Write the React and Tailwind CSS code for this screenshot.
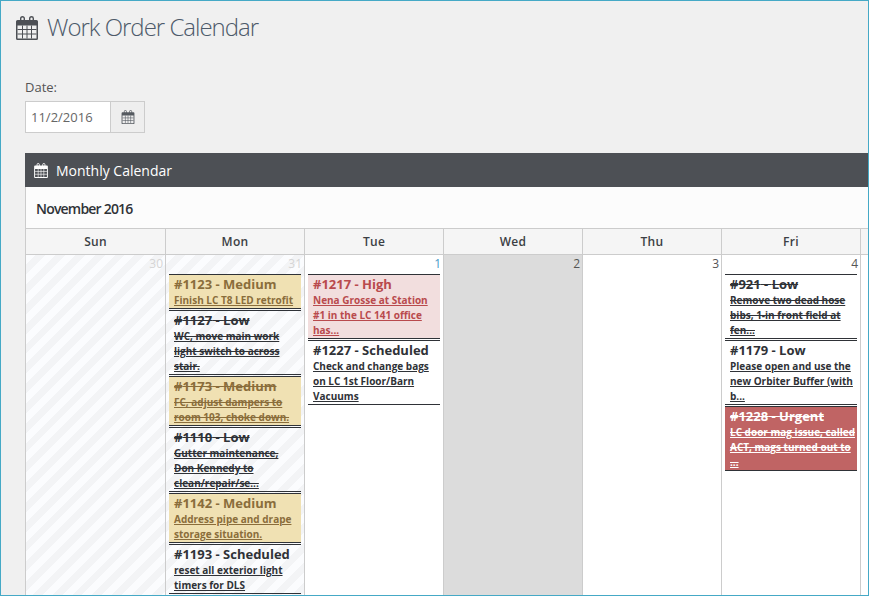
import React from "react";

const CalendarIcon = ({ className }) => (
  <svg className={className} viewBox="0 0 22 24" fill="none">
    {/* body */}
    <path
      fillRule="evenodd"
      fill="currentColor"
      d="M1.5 4H20.5A1.5 1.5 0 0 1 22 5.5V22.5A1.5 1.5 0 0 1 20.5 24H1.5A1.5 1.5 0 0 1 0 22.5V5.5A1.5 1.5 0 0 1 1.5 4ZM1.5 9.5V22.5H20.5V9.5Z"
    />
    <path
      stroke="currentColor"
      strokeWidth="1"
      d="M1.5 13.5H20.5M1.5 18H20.5M6.5 9.5V22.5M11 9.5V22.5M15.5 9.5V22.5"
    />
    {/* rings */}
    <path
      stroke="currentColor"
      strokeWidth="1.4"
      d="M4.7 5V2.5A1.8 1.8 0 0 1 8.3 2.5V5M13.7 5V2.5A1.8 1.8 0 0 1 17.3 2.5V5"
    />
  </svg>
);

const Event = ({ id, level, text, done, tone }) => {
  const tones = {
    plain: "text-[#2f3237]",
    medium: "bg-[#f0e1b3] text-[#8a6d3b]",
    high: "bg-[#f2dede] text-[#b94a4d]",
    urgent: "bg-[#c06464] text-white",
  };
  return (
    <div className={`mb-[1px] border-y border-[#2f3237] pl-[5px] ${tones[tone]} ${done ? "line-through" : ""}`}>
      <div className="h-[18px] text-[13px] font-bold leading-[18px]">
        #{id} - {level}
      </div>
      <div className="text-[10px] font-bold leading-[15px]">
        <span className="underline">{text}</span>
      </div>
    </div>
  );
};

const days = ["Sun", "Mon", "Tue", "Wed", "Thu", "Fri", ""];

const cells = [
  { num: 30, muted: true, striped: true, events: [] },
  {
    num: 31,
    muted: true,
    striped: true,
    events: [
      { id: 1123, level: "Medium", tone: "medium", text: "Finish LC T8 LED retrofit" },
      { id: 1127, level: "Low", tone: "plain", done: true, text: "WC, move main work light switch to across stair." },
      { id: 1173, level: "Medium", tone: "medium", done: true, text: "FC, adjust dampers to room 103, choke down." },
      { id: 1110, level: "Low", tone: "plain", done: true, text: "Gutter maintenance, Don Kennedy to clean/repair/se..." },
      { id: 1142, level: "Medium", tone: "medium", text: "Address pipe and drape storage situation." },
      { id: 1193, level: "Scheduled", tone: "plain", text: "reset all exterior light timers for DLS" },
    ],
  },
  {
    num: 1,
    events: [
      { id: 1217, level: "High", tone: "high", text: "Nena Grosse at Station #1 in the LC 141 office has..." },
      { id: 1227, level: "Scheduled", tone: "plain", text: "Check and change bags on LC 1st Floor/Barn Vacuums" },
    ],
  },
  { num: 2, today: true, events: [] },
  { num: 3, events: [] },
  {
    num: 4,
    events: [
      { id: 921, level: "Low", tone: "plain", done: true, text: "Remove two dead hose bibs, 1-in front field at fen..." },
      { id: 1179, level: "Low", tone: "plain", text: "Please open and use the new Orbiter Buffer (with b..." },
      { id: 1228, level: "Urgent", tone: "urgent", done: true, text: "LC door mag issue, called ACT, mags turned out to ..." },
    ],
  },
];

export default function App() {
  return (
    <div className="h-[596px] w-[869px] overflow-hidden border border-[#45a9c6] bg-[#f0f0f0] font-['Open_Sans',sans-serif]">
      <header className="flex h-[41px] items-center pl-[15px] pt-[13px]">
        <CalendarIcon className="h-[24px] w-[22px] text-[#4d5055]" />
        <h1 className="mb-[2px] ml-[9px] text-[24px] font-light leading-[28px] tracking-[-1px] text-[#4d5a6a]">
          Work Order Calendar
        </h1>
      </header>

      <div className="pl-[24px] pt-[36px]">
        <label className="block text-[13px] leading-[18px] text-[#555555]">Date:</label>
        <div className="mt-[5px] flex h-[32px] w-[120px]">
          <div className="flex w-[86px] items-center border border-[#cccccc] bg-white pl-[5px] pt-[2px] text-[13px] text-[#666666]">
            11/2/2016
          </div>
          <div className="flex flex-1 items-center justify-center border border-l-0 border-[#cccccc] bg-[#eeeeee]">
            <CalendarIcon className="h-[14px] w-[14px] text-[#555a60]" />
          </div>
        </div>
      </div>

      <section className="ml-[24px] mt-[20px] w-[900px] border-l border-[#cccccc] bg-white">
        <div className="-ml-px flex h-[34px] items-center bg-[#4d5055] pl-[9px] text-white">
          <CalendarIcon className="h-[15px] w-[14px]" />
          <span className="ml-[8px] pt-[2px] text-[14px] leading-[20px]">Monthly Calendar</span>
        </div>
        <div className="flex h-[41px] items-center bg-[#fcfcfc] pl-[10px] pt-[2px] text-[14px] font-semibold tracking-[-0.8px] text-[#2f3237]">
          November 2016
        </div>
        <div className="grid grid-cols-[140px_139px_139px_139px_139px_139px_139px] border-y border-[#cccccc] bg-[#f5f5f5]">
          {days.map((day, i) => (
            <div
              key={i}
              className="flex h-[25px] items-center justify-center border-r border-[#cccccc] text-[12px] font-semibold tracking-[0.3px] text-[#3c3f44]"
            >
              {day}
            </div>
          ))}
        </div>
        <div className="grid h-[360px] grid-cols-[140px_139px_139px_139px_139px_139px_139px]">
          {cells.map((cell) => (
            <div
              key={cell.num}
              className={`border-r border-[#cccccc] px-[3px] ${
                cell.striped
                  ? "bg-[repeating-linear-gradient(135deg,#fbfcfe_0,#fbfcfe_7px,#f3f4f6_7px,#f3f4f6_14px)]"
                  : cell.today
                    ? "bg-[#dcdcdc]"
                    : "bg-white"
              }`}
            >
              <div
                className={`-mr-[1px] h-[19px] text-right text-[12px] leading-[17px] ${
                  cell.muted ? "text-[#d5d5d5]" : cell.num === 1 ? "text-[#4a9bc8]" : "text-[#555555]"
                }`}
              >
                {cell.num}
              </div>
              {cell.events.map((event) => (
                <Event key={event.id} {...event} />
              ))}
            </div>
          ))}
        </div>
      </section>
    </div>
  );
}
